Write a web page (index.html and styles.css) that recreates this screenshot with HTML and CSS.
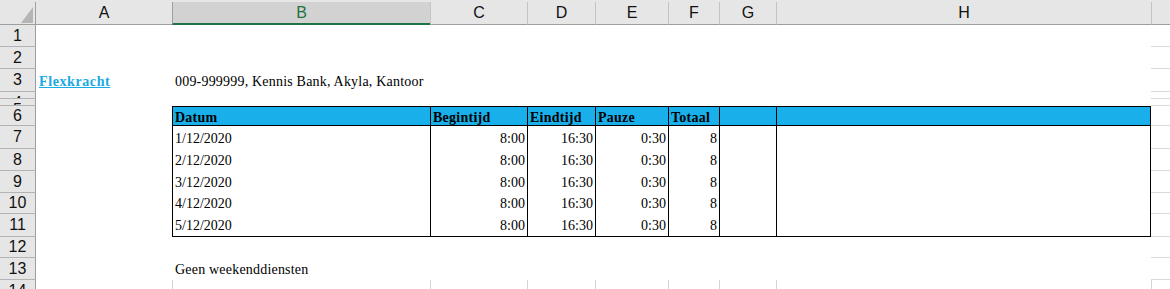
FILE: index.html
```html
<!DOCTYPE html>
<html lang="nl">
<head>
  <meta charset="UTF-8">
  <meta name="viewport" content="width=device-width, initial-scale=1.0">
  <title>Rooster - Flexkracht</title>
  <link rel="stylesheet" href="styles.css">
</head>
<body>
  <div class="sheet">
    <!-- kolomkoppen -->
    <div class="row head">
      <div class="corner">
        <svg width="12" height="16" viewBox="0 0 12 16"><polygon points="12,0 12,16 0,16" fill="#b5b5b5"/></svg>
      </div>
      <div class="colhead col-a">A</div>
      <div class="colhead sel">B</div>
      <div class="colhead">C</div>
      <div class="colhead">D</div>
      <div class="colhead">E</div>
      <div class="colhead">F</div>
      <div class="colhead">G</div>
      <div class="colhead">H</div>
      <div class="colhead"></div>
    </div>

    <div class="row h22">
      <div class="rowhead">1</div>
      <div class="gap"></div>
    </div>
    <div class="row h22">
      <div class="rowhead">2</div>
      <div class="gap"></div>
    </div>
    <div class="row h23">
      <div class="rowhead">3</div>
      <div class="c"><span class="link">Flexkracht</span></div>
      <div class="c txt">009-999999, Kennis Bank, Akyla, Kantoor</div>
      <div class="gap"></div>
    </div>
    <div class="row h7">
      <div class="rowhead tiny">4</div>
      <div class="gap"></div>
    </div>
    <div class="row h7">
      <div class="rowhead tiny">5</div>
      <div class="gap"></div>
    </div>

    <!-- tabel -->
    <div class="row h20">
      <div class="rowhead">6</div>
      <div class="c col-b t th">Datum</div>
      <div class="c t th">Begintijd</div>
      <div class="c t th">Eindtijd</div>
      <div class="c t th">Pauze</div>
      <div class="c t th">Totaal</div>
      <div class="c t th"></div>
      <div class="c t th end"></div>
      <div class="gap"></div>
    </div>
    <div class="row h23">
      <div class="rowhead">7</div>
      <div class="c col-b t">1/12/2020</div>
      <div class="c t num">8:00</div>
      <div class="c t num">16:30</div>
      <div class="c t num">0:30</div>
      <div class="c t num">8</div>
      <div class="c t"></div>
      <div class="c t end"></div>
      <div class="gap"></div>
    </div>
    <div class="row h22">
      <div class="rowhead">8</div>
      <div class="c col-b t">2/12/2020</div>
      <div class="c t num">8:00</div>
      <div class="c t num">16:30</div>
      <div class="c t num">0:30</div>
      <div class="c t num">8</div>
      <div class="c t"></div>
      <div class="c t end"></div>
      <div class="gap"></div>
    </div>
    <div class="row h22">
      <div class="rowhead">9</div>
      <div class="c col-b t">3/12/2020</div>
      <div class="c t num">8:00</div>
      <div class="c t num">16:30</div>
      <div class="c t num">0:30</div>
      <div class="c t num">8</div>
      <div class="c t"></div>
      <div class="c t end"></div>
      <div class="gap"></div>
    </div>
    <div class="row h21">
      <div class="rowhead">10</div>
      <div class="c col-b t">4/12/2020</div>
      <div class="c t num">8:00</div>
      <div class="c t num">16:30</div>
      <div class="c t num">0:30</div>
      <div class="c t num">8</div>
      <div class="c t"></div>
      <div class="c t end"></div>
      <div class="gap"></div>
    </div>
    <div class="row h23">
      <div class="rowhead">11</div>
      <div class="c col-b t tb">5/12/2020</div>
      <div class="c t tb num">8:00</div>
      <div class="c t tb num">16:30</div>
      <div class="c t tb num">0:30</div>
      <div class="c t tb num">8</div>
      <div class="c t tb"></div>
      <div class="c t tb end"></div>
      <div class="gap"></div>
    </div>

    <div class="row h21">
      <div class="rowhead">12</div>
      <div class="gap"></div>
    </div>
    <div class="row h22">
      <div class="rowhead">13</div>
      <div class="c col-b txt">Geen weekenddiensten</div>
      <div class="gap"></div>
    </div>
    <div class="row h22">
      <div class="rowhead">14</div>
      <div class="c"></div>
      <div class="c g"></div>
      <div class="c g"></div>
      <div class="c g"></div>
      <div class="c g"></div>
      <div class="c g"></div>
      <div class="c g"></div>
      <div class="c g"></div>
      <div class="c g"></div>
    </div>
  </div>
</body>
</html>
```

FILE: styles.css
```css
* {
  margin: 0;
  padding: 0;
  box-sizing: border-box;
}

body {
  font-family: "Liberation Serif", "Times New Roman", serif;
  font-size: 14px;
  color: #000;
  background: #fff;
  overflow: hidden;
}

.sheet {
  width: 1170px;
  height: 289px;
  overflow: hidden;
}

.row {
  display: grid;
  grid-template-columns: 36px 136px 258px 97px 68px 73px 51px 57px 375px 19px;
}

.h7 { height: 7px; }
.h20 { height: 20px; }
.h21 { height: 21px; }
.h22 { height: 22px; }
.h23 { height: 23px; }

/* kolomkoppen */
.head {
  height: 25px;
  padding-top: 2px;
  background: #e6e6e6;
}

.corner {
  display: flex;
  align-items: flex-end;
  justify-content: flex-end;
  padding: 0 2px 1px 0;
  border-right: 1px solid #9e9e9e;
  border-bottom: 1px solid #9e9e9e;
}

.colhead {
  display: flex;
  align-items: center;
  justify-content: center;
  font-family: "Liberation Sans", Arial, sans-serif;
  font-size: 16px;
  color: #111;
  border-left: 1px solid #c4c4c4;
  border-bottom: 1px solid #9e9e9e;
}

.colhead.col-a {
  border-left: none;
}

.colhead.sel {
  background: #d2d2d2;
  color: #217346;
  border-left-color: #9e9e9e;
  border-bottom: 2px solid #217346;
}

/* rijkoppen */
.rowhead {
  display: flex;
  align-items: center;
  justify-content: center;
  overflow: hidden;
  font-family: "Liberation Sans", Arial, sans-serif;
  font-size: 16px;
  line-height: 18px;
  color: #111;
  background: #e6e6e6;
  border-right: 1px solid #9e9e9e;
  border-bottom: 1px solid #b4b4b4;
}

/* verkleinde rijen 4 en 5: alleen de bovenkant van het cijfer is zichtbaar */
.rowhead.tiny {
  align-items: flex-start;
  padding-top: 4px;
  line-height: 14px;
}

/* cellen */
.c {
  display: flex;
  align-items: flex-end;
  padding: 0 2px 3px 3px;
  line-height: 14px;
  white-space: nowrap;
  min-width: 0;
}

.txt {
  letter-spacing: 0.2px;
}

.col-b {
  grid-column: 3;
}

.gap {
  grid-column: 10;
  border-bottom: 1px solid #dadada;
}

.link {
  color: #19a9e3;
  font-weight: bold;
  text-decoration: underline;
  letter-spacing: 0.6px;
}

.t {
  border-left: 1px solid #000;
  padding-left: 2px;
}

.t.end {
  border-right: 1px solid #000;
}

.th {
  background: #18afea;
  font-weight: bold;
  letter-spacing: 0.25px;
  border-top: 1px solid #000;
  border-bottom: 1px solid #000;
  padding-bottom: 0;
}

.tb {
  border-bottom: 1px solid #000;
}

.num {
  justify-content: flex-end;
}

.g {
  border-left: 1px solid #d4d4d4;
}
```
